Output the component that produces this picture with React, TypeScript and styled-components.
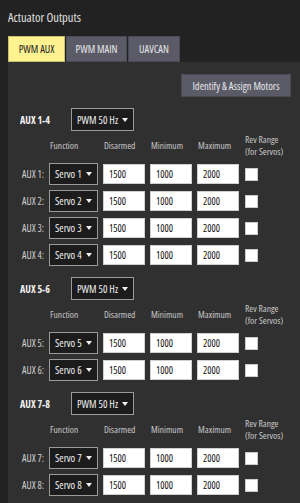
import { Fragment } from 'react';
import styled, { createGlobalStyle } from 'styled-components';

const GlobalStyle = createGlobalStyle`
  html, body {
    margin: 0;
    padding: 0;
    background: #222222;
  }
  body {
    font-family: "Open Sans", "Noto Sans", sans-serif;
    font-stretch: 80%;
    color: #e6e6e6;
  }
`;

const Page = styled.div`
  width: 300px;
  height: 503px;
  overflow: hidden;
  padding-left: 8px;
  box-sizing: border-box;
  display: flex;
  flex-direction: column;
`;

const Title = styled.div`
  font-size: 12.5px;
  line-height: 16px;
  padding-top: 10px;
  height: 26px;
  box-sizing: border-box;
  color: #e0e0e0;
`;

const TabBar = styled.div`
  display: flex;
  gap: 1px;
  margin-top: 10px;
`;

const Tab = styled.div<{ $active?: boolean; $width: number }>`
  width: ${(p) => p.$width}px;
  height: 26px;
  display: flex;
  align-items: center;
  justify-content: center;
  white-space: nowrap;
  font-size: 10.5px;
  background: ${(p) => (p.$active ? '#fff291' : '#5b5b68')};
  color: ${(p) => (p.$active ? '#222' : '#e6e6e6')};
  border: 1px solid ${(p) => (p.$active ? '#c9bf6e' : '#4a4a55')};
  box-sizing: border-box;
`;

const Panel = styled.div`
  flex: 1;
  background: #303030;
  padding: 12px 0 0 12px;
  display: flex;
  flex-direction: column;
`;

const ButtonRow = styled.div`
  display: flex;
  justify-content: flex-end;
  padding-right: 9px;
  margin-bottom: 11px;
`;

const Button = styled.div`
  height: 23px;
  width: 110px;
  display: flex;
  align-items: center;
  justify-content: center;
  white-space: nowrap;
  font-size: 10.5px;
  background: #5b5b68;
  color: #e6e6e6;
  border: 1px solid #4a4a55;
  box-sizing: border-box;
`;

const Group = styled.div`
  display: flex;
  flex-direction: column;
  margin-bottom: 11px;
`;

const GroupHead = styled.div`
  display: flex;
  align-items: center;
  height: 23px;
`;

const GroupLabel = styled.div`
  width: 51px;
  font-size: 10px;
  font-weight: 700;
  color: #f2f2f2;
`;

const Combo = styled.div<{ $width: number; $height: number }>`
  width: ${(p) => p.$width}px;
  height: ${(p) => p.$height}px;
  box-sizing: border-box;
  border: 1px solid #9a9a9a;
  background: #1c1c1c;
  display: flex;
  align-items: center;
  justify-content: space-between;
  padding: 0 5px;
  font-size: 10.5px;
  color: #f0f0f0;
  white-space: nowrap;
`;

const Grid = styled.div`
  display: grid;
  grid-template-columns: 24px 49px 42px 42px 42px auto;
  grid-template-rows: 24px;
  grid-auto-rows: 22px;
  column-gap: 5px;
  row-gap: 5px;
  align-items: center;
  margin-top: 3px;
`;

const HeadCell = styled.div<{ $col: number }>`
  grid-column: ${(p) => p.$col};
  font-size: 9.5px;
  line-height: 12px;
  color: #c8c8c8;
  padding-left: 1px;
  white-space: nowrap;
`;

const RowLabel = styled.div`
  font-size: 10px;
  color: #cfcfcf;
  text-align: right;
  white-space: nowrap;
`;

const Input = styled.div`
  height: 20px;
  box-sizing: border-box;
  background: #ffffff;
  border: 1px solid #d0d0d0;
  color: #111;
  font-size: 10px;
  display: flex;
  align-items: center;
  padding-left: 5px;
`;

const Check = styled.div`
  width: 13px;
  height: 13px;
  margin-left: 1px;
  background: #ffffff;
  border: 1px solid #cccccc;
  box-sizing: border-box;
`;

const Caret = () => (
  <svg width="6" height="4" viewBox="0 0 6 4">
    <path d="M0 0 L6 0 L3 4 Z" fill="#f0f0f0" />
  </svg>
);

const groups = [
  { name: 'AUX 1-4', outputs: [1, 2, 3, 4] },
  { name: 'AUX 5-6', outputs: [5, 6] },
  { name: 'AUX 7-8', outputs: [7, 8] },
];

const App = () => {
  return (
    <Page>
      <GlobalStyle />
      <Title>Actuator Outputs</Title>
      <TabBar>
        <Tab $active $width={57}>PWM AUX</Tab>
        <Tab $width={61}>PWM MAIN</Tab>
        <Tab $width={52}>UAVCAN</Tab>
      </TabBar>
      <Panel>
        <ButtonRow>
          <Button>Identify &amp; Assign Motors</Button>
        </ButtonRow>
        {groups.map((g) => (
          <Group key={g.name}>
            <GroupHead>
              <GroupLabel>{g.name}</GroupLabel>
              <Combo $width={63} $height={23}>
                PWM 50 Hz <Caret />
              </Combo>
            </GroupHead>
            <Grid>
              <HeadCell $col={2}>Function</HeadCell>
              <HeadCell $col={3}>Disarmed</HeadCell>
              <HeadCell $col={4}>Minimum</HeadCell>
              <HeadCell $col={5}>Maximum</HeadCell>
              <HeadCell $col={6}>
                Rev Range
                <br />
                (for Servos)
              </HeadCell>
              {g.outputs.map((n) => (
                <Fragment key={n}>
                  <RowLabel>AUX {n}:</RowLabel>
                  <Combo $width={49} $height={22}>
                    Servo {n} <Caret />
                  </Combo>
                  <Input>1500</Input>
                  <Input>1000</Input>
                  <Input>2000</Input>
                  <Check />
                </Fragment>
              ))}
            </Grid>
          </Group>
        ))}
      </Panel>
    </Page>
  );
};

export default App;
